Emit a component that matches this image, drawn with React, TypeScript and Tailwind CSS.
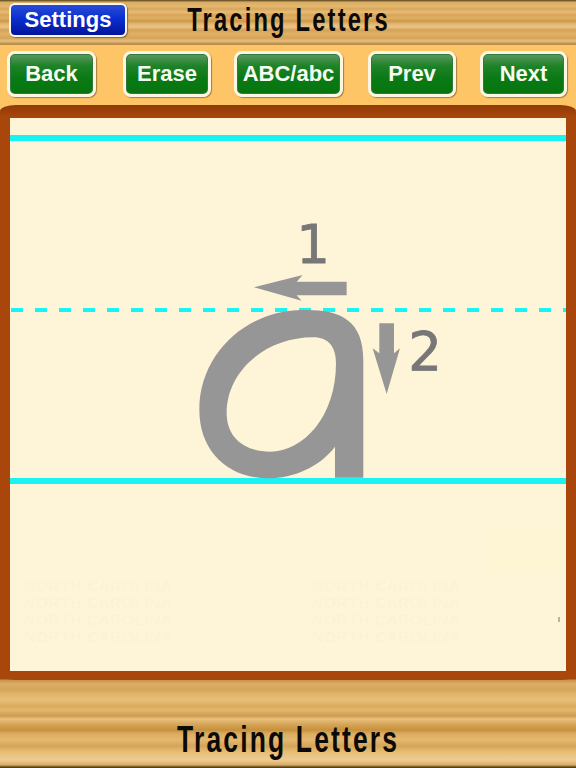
const woodTop =
  "bg-[linear-gradient(180deg,#5f4a22_0px,#8a6a35_1px,#d8ab62_2px,#e6b86f_6px,#d6a65b_9px,#e8bd78_12px,#d8a558_15px,#e0b066_18px,#cc994c_21px,#e4b76f_24px,#ebc487_27px,#d3a258_30px,#e2b166_34px,#d5a458_38px,#e6bf7d_41px,#b98d49_44px)]";
const woodBottom =
  "bg-[linear-gradient(180deg,#a8460c_0px,#a8460c_4px,#c4954d_5px,#dcae64_9px,#d4a65b_15px,#e1b56a_19px,#e7bf78_25px,#daab5f_31px,#e2b76d_35px,#cd9c50_41px,#e8c27f_44px,#d7a65a_49px,#c6913b_55px,#dcad63_59px,#e4b86f_65px,#d5a458_71px,#e6bd75_77px,#edcc94_85px,#daab61_90px,#5c4a22_92px,#4a3a1a_93px)]";

const paperFont = "DejaVu Sans, sans-serif";

function ToolButton({ label, width, className = "" }: { label: string; width: string; className?: string }) {
  return (
    <button
      className={`${width} ${className} h-[46px] rounded-[8px] border-[3px] border-[#fdf6e4] bg-[linear-gradient(180deg,#5f9a63_0%,#1e8228_30%,#0a7a14_60%,#067510_100%)] text-[22px] leading-none font-bold text-[#f6fbf2] shadow-[1px_1px_1px_#a57f3c,inset_0_0_0_1px_#2f7a3c]`}
    >
      {label}
    </button>
  );
}

function TracingSheet() {
  const rows = [591, 608, 625, 642];
  return (
    <svg viewBox="0 0 556 553" className="block h-full w-full" role="img" aria-label="Letter a tracing guide">
      <rect x="478" y="407" width="78" height="46" fill="#fdf5d4" />
      {rows.map((y) => (
        <g key={y} fontFamily="Liberation Sans, sans-serif" fontSize="15" fill="#fbf2d5" letterSpacing="1">
          <text x="14" y={y - 118}>NORTH CAROLINA</text>
          <text x="302" y={y - 118}>NORTH CAROLINA</text>
        </g>
      ))}
      <rect x="548" y="499" width="2" height="5" fill="#b9b5a0" />

      <rect x="0" y="17" width="556" height="6" fill="#19f3f3" />
      <line x1="0" y1="192" x2="556" y2="192" stroke="#19f3f3" strokeWidth="4" strokeDasharray="12 12" strokeDashoffset="23" />
      <rect x="0" y="360" width="556" height="6" fill="#19f3f3" />

      <g transform="translate(170,92) scale(0.3333)" fill="#969696">
        <path
          fillRule="evenodd"
          d="M370 300C480 298 550 330 550 450L550 803L465 803L465 710C420 770 340 805 265 805C140 805 58 720 58 600C58 430 200 300 370 300ZM400 382C260 382 140 480 140 610C140 680 190 725 270 725C370 725 468 620 468 460C468 410 445 382 400 382Z"
        />
        <path d="M222 232L368 195L350 215L500 215L500 256L350 256L365 272Z" />
        <path d="M598 340L642 340L642 430L660 415L620 552L578 415L598 430Z" />
      </g>
      <text x="303" y="145" textAnchor="middle" fontFamily={paperFont} fontSize="53" fill="#777777" stroke="#777777" strokeWidth="0.8">1</text>
      <text x="415" y="252" textAnchor="middle" fontFamily={paperFont} fontSize="53" fill="#777777" stroke="#777777" strokeWidth="0.8">2</text>
    </svg>
  );
}

export default function App() {
  return (
    <div className="flex h-[768px] w-[576px] flex-col overflow-hidden bg-[#fdc566] [font-family:'Liberation_Sans',Arial,sans-serif]">
      <header className={`flex h-[45px] shrink-0 items-start pt-[3px] pl-[9px] ${woodTop}`}>
        <button className="h-[34px] w-[118px] shrink-0 rounded-[6px] border-[2px] border-[#f8f6ee] bg-[linear-gradient(180deg,#2a4cd6_0%,#0a2fd0_45%,#02149a_100%)] text-[22px] leading-none font-bold text-white shadow-[1px_1px_1px_#8a6a35]">
          Settings
        </button>
        <h1 className="-mt-[2px] w-[323px] shrink-0 scale-x-[0.72] text-center text-[33px] leading-[38px] font-bold tracking-[3px] whitespace-nowrap text-[#0c0a08]">
          Tracing Letters
        </h1>
      </header>

      <nav className="flex h-[60px] shrink-0 pt-[6px] pl-[7px]">
        <ToolButton label="Back" width="w-[89px]" />
        <ToolButton label="Erase" width="w-[88px]" className="ml-[27px]" />
        <ToolButton label="ABC/abc" width="w-[109px]" className="ml-[23px]" />
        <ToolButton label="Prev" width="w-[88px]" className="ml-[25px]" />
        <ToolButton label="Next" width="w-[87px]" className="ml-[24px]" />
      </nav>

      <main className="relative z-10 -mb-[5px] min-h-0 flex-1 rounded-[16px/6px] bg-[linear-gradient(180deg,#8f3b05_0px,#a8460c_12px,#a8460c_100%)] pt-[13px] pr-[10px] pb-[9px] pl-[10px]">
        <div className="h-full bg-[#fef5d8]">
          <TracingSheet />
        </div>
      </main>

      <footer className={`flex h-[93px] shrink-0 justify-center pt-[44px] ${woodBottom}`}>
        <div className="scale-x-[0.716] text-[37px] leading-[42px] font-bold tracking-[3px] whitespace-nowrap text-[#0c0a08]">
          Tracing Letters
        </div>
      </footer>
    </div>
  );
}
